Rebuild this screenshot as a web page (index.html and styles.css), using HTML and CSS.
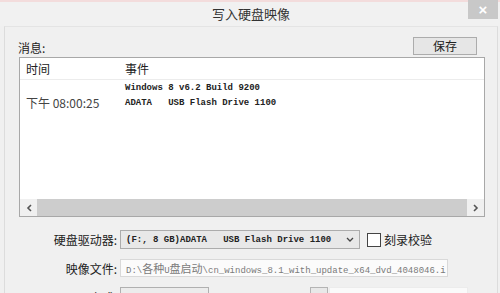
FILE: index.html
```html
<!DOCTYPE html>
<html lang="zh-CN">
<head>
    <meta charset="UTF-8">
    <title>写入硬盘映像</title>
    <link rel="stylesheet" href="styles.css">
</head>
<body>
    <div class="window">
        <div class="titlebar">
            <div class="title">写入硬盘映像</div>
            <div class="close">&#215;</div>
        </div>
        <div class="client">
            <!-- message list -->
            <div class="top-row">
                <span class="label">消息:</span>
                <div class="button">保存</div>
            </div>
            <div class="listview">
                <div class="lv-head">
                    <div class="col-time">时间</div>
                    <div class="col-event">事件</div>
                </div>
                <div class="lv-body">
                    <div class="lv-row">
                        <div class="col-time"></div>
                        <div class="col-event mono">Windows 8 v6.2 Build 9200</div>
                    </div>
                    <div class="lv-row">
                        <div class="col-time time">下午 08:00:25</div>
                        <div class="col-event mono">ADATA   USB Flash Drive 1100</div>
                    </div>
                </div>
                <div class="hscroll">
                    <div class="arrow">
                        <svg width="6" height="8" viewBox="0 0 6 8"><path d="M5 1 L2 4 L5 7" fill="none" stroke="#555" stroke-width="1.6"/></svg>
                    </div>
                    <div class="thumb"></div>
                    <div class="arrow">
                        <svg width="6" height="8" viewBox="0 0 6 8"><path d="M1 1 L4 4 L1 7" fill="none" stroke="#555" stroke-width="1.6"/></svg>
                    </div>
                </div>
            </div>

            <!-- options -->
            <div class="form">
                <div class="form-row">
                    <label class="field-label">硬盘驱动器:</label>
                    <div class="select mono">
                        <span>(F:, 8 GB)ADATA   USB Flash Drive 1100</span>
                        <svg width="8" height="5" viewBox="0 0 8 5"><path d="M1 1 L4 4 L7 1" fill="none" stroke="#444" stroke-width="1.3"/></svg>
                    </div>
                    <div class="check"></div>
                    <span class="check-text">刻录校验</span>
                </div>
                <div class="form-row">
                    <label class="field-label">映像文件:</label>
                    <div class="input mono">D:\<span class="cjk">各种</span>U<span class="cjk">盘启动</span>\cn_windows_8.1_with_update_x64_dvd_4048046.i</div>
                </div>
                <div class="form-row">
                    <label class="field-label">写入方式:</label>
                    <div class="combo"></div>
                    <div class="small-box"></div>
                    <div class="wide-box"></div>
                </div>
            </div>
        </div>
    </div>
</body>
</html>
```

FILE: styles.css
```css
/* dialog window */
body {
    margin: 0;
    padding: 0;
    font-family: "Noto Sans CJK SC", "Liberation Sans", sans-serif;
    font-size: 12px;
    color: #222;
    background-color: #f0f0f0;
    overflow: hidden;
}
.window {
    width: 500px;
    height: 293px;
    overflow: hidden;
    background-color: #f0f0f0;
}
.titlebar {
    display: grid;
    height: 24px;
    border-top: 2px solid #f3dcdc;
    background-color: #f1f1f1;
}
.title {
    grid-area: 1 / 1;
    text-align: center;
    font-size: 13px;
    line-height: 23px;
    color: #333;
    padding-left: 2px;
}
.close {
    grid-area: 1 / 1;
    justify-self: end;
    align-self: start;
    width: 30px;
    height: 19px;
    margin-top: -2px;
    margin-right: 2px;
    background-color: #c8c8c8;
    color: #fff;
    font-family: "Liberation Sans", sans-serif;
    font-size: 15px;
    font-weight: bold;
    line-height: 19px;
    text-align: center;
}
.client {
    margin: 0 2px 0 4px;
    border-left: 1px solid #dcdcdc;
    border-right: 1px solid #dcdcdc;
    border-top: 1px solid #e4e4e4;
    padding: 10px 12px 0 14px;
    height: 300px;
}
.mono {
    font-family: "Liberation Mono", "Noto Sans CJK SC", monospace;
    font-size: 9px;
    font-weight: bold;
    white-space: pre;
}
.top-row {
    display: flex;
    justify-content: space-between;
    align-items: flex-end;
    height: 18px;
    margin-bottom: 2px;
}
.label {
    margin-left: -1px;
    line-height: 14px;
}
.button {
    width: 62px;
    height: 16px;
    margin-right: 8px;
    border: 1px solid #acacac;
    background-color: #e6e6e6;
    text-align: center;
    line-height: 16px;
}
.listview {
    height: 158px;
    border: 1px solid #a8a8a8;
    background-color: #fff;
    display: flex;
    flex-direction: column;
}
.lv-head {
    display: flex;
    height: 21px;
    border-bottom: 1px solid #ececec;
    align-items: center;
}
.lv-body {
    flex: 1;
}
.lv-row {
    display: flex;
    height: 15px;
    align-items: center;
}
.col-time {
    width: 99px;
    padding-left: 6px;
}
.time {
    color: #444;
}
.hscroll {
    display: flex;
    height: 17px;
    background-color: #f0f0f0;
}
.arrow {
    width: 17px;
    display: flex;
    align-items: center;
    justify-content: center;
}
.thumb {
    flex: 1;
    background-color: #cdcdcd;
}
.form {
    margin-top: 13px;
    display: flex;
    flex-direction: column;
    gap: 10px;
}
.form-row {
    display: flex;
    align-items: center;
}
.field-label {
    width: 98px;
    margin-right: 3px;
    text-align: right;
    font-size: 12px;
}
.select {
    width: 228px;
    height: 17px;
    border: 1px solid #acacac;
    background-color: #e8e8e8;
    padding: 0 5px 0 5px;
    display: flex;
    align-items: center;
    justify-content: space-between;
    color: #222;
}
.check {
    width: 12px;
    height: 12px;
    margin-left: 7px;
    border: 1px solid #444;
    background-color: #fff;
}
.check-text {
    margin-left: 3px;
    font-size: 12px;
}
.input {
    width: 321px;
    height: 16px;
    line-height: 16px;
    border: 1px solid #d9d9d9;
    background-color: #fbfbfb;
    padding-left: 5px;
    color: #7a7a7a;
    font-weight: normal;
    overflow: hidden;
}
.cjk {
    font-family: "Noto Sans CJK SC", sans-serif;
    font-size: 11px;
}
.combo {
    width: 87px;
    height: 18px;
    border: 1px solid #b0b0b0;
    background-color: #ececec;
}
.small-box {
    width: 16px;
    height: 18px;
    margin-left: 101px;
    border: 1px solid #b4b4b4;
    background-color: #e8e8e8;
}
.wide-box {
    width: 137px;
    height: 18px;
    margin-left: 1px;
    background-color: #fafafa;
    border: 1px solid #ececec;
}
```
